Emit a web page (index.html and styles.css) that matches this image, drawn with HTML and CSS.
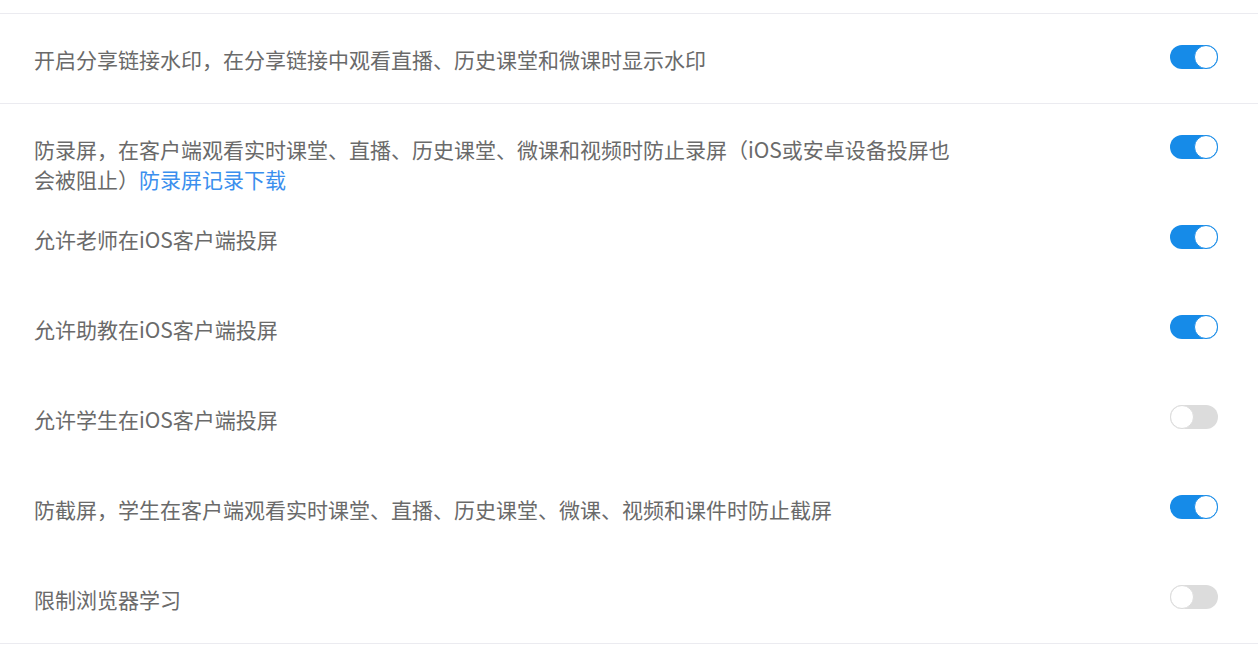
FILE: index.html
```html
<!DOCTYPE html>
<html lang="zh-CN">
<head>
<meta charset="utf-8">
<link rel="stylesheet" href="styles.css">
</head>
<body>
<div class="page">
  <section class="group">
    <div class="row">
      <div class="label">开启分享链接水印，在分享链接中观看直播、历史课堂和微课时显示水印</div>
      <span class="switch on"><span class="knob"></span></span>
    </div>
  </section>
  <section class="group">
    <div class="row">
      <div class="label">防录屏，在客户端观看实时课堂、直播、历史课堂、微课和视频时防止录屏（iOS或安卓设备投屏也会被阻止）<a class="link" href="#">防录屏记录下载</a></div>
      <span class="switch on"><span class="knob"></span></span>
    </div>
    <div class="row">
      <div class="label">允许老师在iOS客户端投屏</div>
      <span class="switch on"><span class="knob"></span></span>
    </div>
    <div class="row">
      <div class="label">允许助教在iOS客户端投屏</div>
      <span class="switch on"><span class="knob"></span></span>
    </div>
    <div class="row">
      <div class="label">允许学生在iOS客户端投屏</div>
      <span class="switch off"><span class="knob"></span></span>
    </div>
    <div class="row">
      <div class="label">防截屏，学生在客户端观看实时课堂、直播、历史课堂、微课、视频和课件时防止截屏</div>
      <span class="switch on"><span class="knob"></span></span>
    </div>
    <div class="row">
      <div class="label">限制浏览器学习</div>
      <span class="switch off"><span class="knob"></span></span>
    </div>
  </section>
</div>
</body>
</html>
```

FILE: styles.css
```css
html, body {
  margin: 0;
  padding: 0;
  background: #fff;
}
body {
  font-family: "Noto Sans CJK SC", "Noto Sans", sans-serif;
  color: #6a6a6a;
}
.page {
  padding-top: 13px;
}
.group {
  border-top: 1px solid #ebebf0;
}
.group:last-child {
  border-bottom: 1px solid #ebebf0;
}
.row {
  display: flex;
  justify-content: space-between;
  align-items: flex-start;
  box-sizing: border-box;
  height: 90px;
  padding: 30px 40px 0 34px;
}
.group:first-child .row {
  height: 89px;
  padding-top: 30px;
}
.group:last-child .row:last-child {
  height: 89px;
}
.label {
  font-size: 21px;
  line-height: 30px;
  max-width: 930px;
}
.link {
  color: #3b8fee;
  text-decoration: none;
}
.switch {
  position: relative;
  flex: none;
  width: 48px;
  height: 24px;
  border-radius: 12px;
  margin-top: 1px;
}
.switch.on {
  background: #168be8;
}
.switch.off {
  background: #dcdcdc;
}
.knob {
  position: absolute;
  top: 0;
  width: 24px;
  height: 24px;
  border-radius: 50%;
  background: #fff;
  box-sizing: border-box;
}
.switch.on .knob {
  right: 0;
  border: 1.5px solid #168be8;
}
.switch.off .knob {
  left: 0;
  border: 1.5px solid #dcdcdc;
}
```
